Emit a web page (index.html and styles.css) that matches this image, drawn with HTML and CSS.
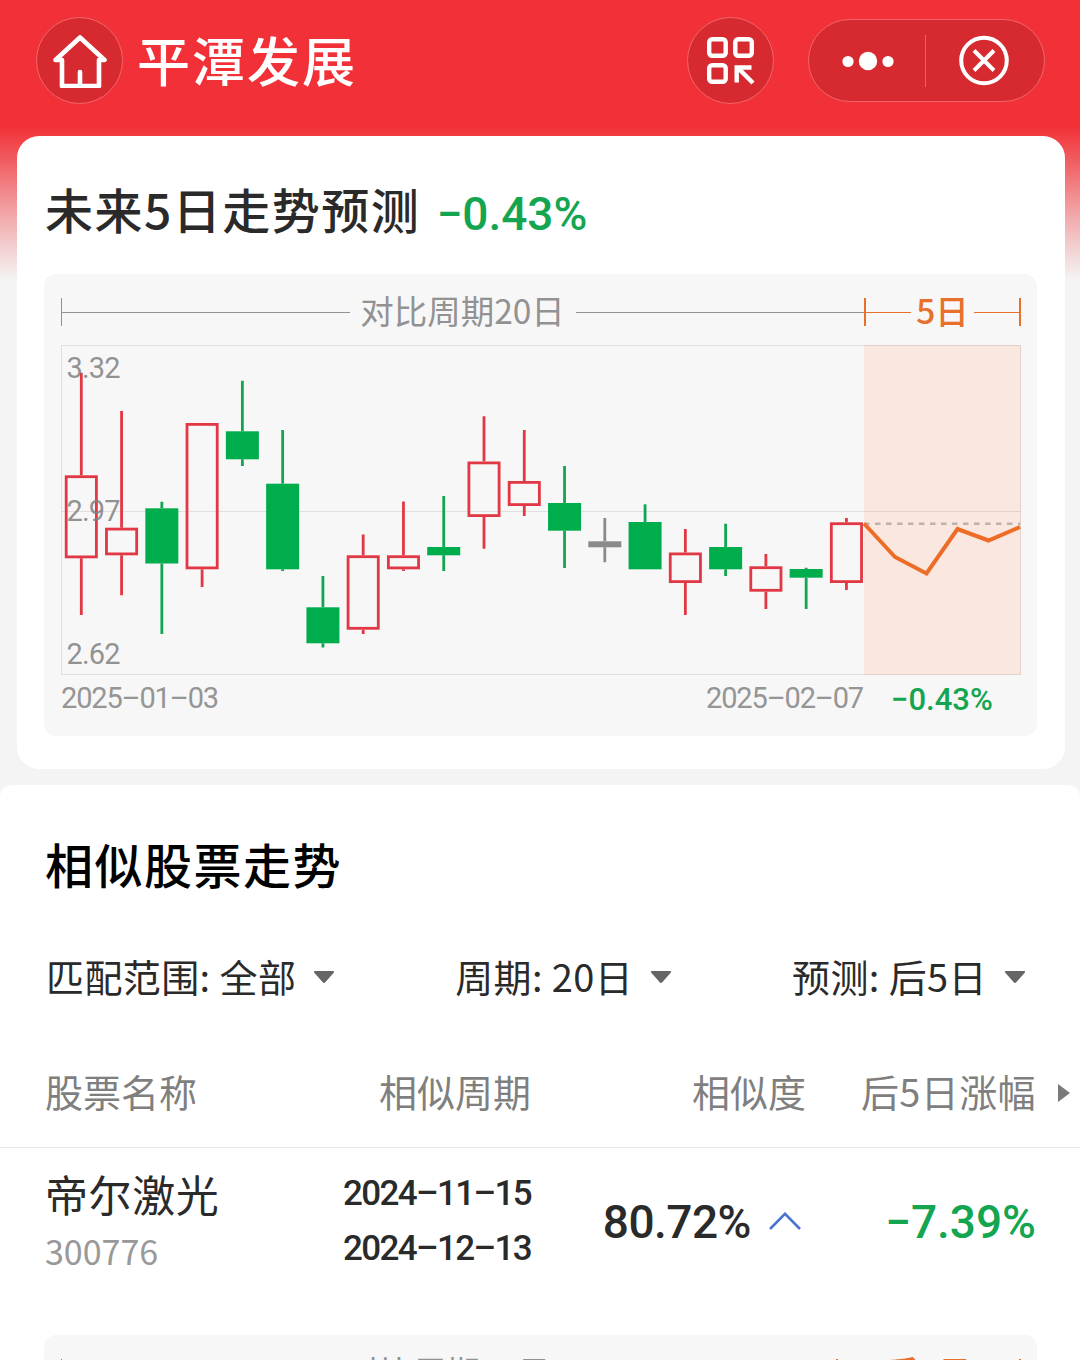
FILE: index.html
```html
<!DOCTYPE html>
<html lang="zh-CN">

<head>
  <meta charset="UTF-8">
  <meta name="viewport" content="width=device-width, initial-scale=1.0">
  <title>平潭发展</title>
  <link rel="stylesheet" href="styles.css">
</head>

<body>
  <header class="header">
    <div class="round-btn">
      <svg class="home" width="58" height="58" viewBox="0 0 58 58" fill="none" stroke="#fff" stroke-width="4.6" stroke-linecap="round" stroke-linejoin="round">
        <path d="M10.500 30H4.500L29 7.500 53.500 30H48V56H11V30" />
        <path d="M29 55V42" />
      </svg>
    </div>
    <h1 class="stock-name">平潭发展</h1>
    <div class="round-btn scan-btn">
      <svg width="48" height="48" viewBox="0.5 0.5 48 48" fill="none" stroke="#fff" stroke-width="4.4">
        <rect x="2.700" y="2.700" width="16.500" height="16.500" rx="3" />
        <rect x="28.800" y="2.700" width="16.500" height="16.500" rx="3" />
        <rect x="2.700" y="28.800" width="16.500" height="16.500" rx="3" />
        <path d="M45 31H30.200V46M31 31 46.500 46.500" />
      </svg>
    </div>
    <div class="capsule">
      <svg class="dots" width="54" height="20" viewBox="0 0 54 20" fill="#fff">
        <circle cx="7" cy="10.500" r="5.600" />
        <circle cx="27" cy="10" r="9.200" />
        <circle cx="47" cy="10.500" r="5.600" />
      </svg>
      <span class="capsule-line"></span>
      <svg class="close" width="52" height="52" viewBox="0 0.5 52 52" fill="none" stroke="#fff" stroke-width="4">
        <circle cx="26" cy="26" r="22.800" />
        <path d="M16 16 36 36M36 16 16 36" />
      </svg>
    </div>
  </header>

  <section class="card">
    <div class="card-title">
      <h2>未来5日走势预测</h2>
      <span class="forecast num green">−0.43%</span>
    </div>
    <div class="chart">
      <div class="ranges">
        <div class="range history">
          <span>对比周期20日</span>
        </div>
        <div class="range future">
          <span>5日</span>
        </div>
      </div>
      <svg class="plot" id="plot" width="960" height="330" viewBox="61 345 960 330"></svg>
      <div class="dates num">
        <span>2025–01–03</span>
        <span class="date-end">2025–02–07</span>
        <span class="date-change green">−0.43%</span>
      </div>
    </div>
  </section>

  <section class="similar">
    <h2 class="similar-title">相似股票走势</h2>
    <div class="filters">
      <div class="filter"><span>匹配范围: 全部</span>
        <svg width="22" height="14" viewBox="0 0 22 14"><path d="M2 1H20Q22 1 20.500 3L12.500 12Q11 14 9.500 12L1.500 3Q0 1 2 1Z" fill="#666" /></svg>
      </div>
      <div class="filter"><span>周期: 20日</span>
        <svg width="22" height="14" viewBox="0 0 22 14"><path d="M2 1H20Q22 1 20.500 3L12.500 12Q11 14 9.500 12L1.500 3Q0 1 2 1Z" fill="#666" /></svg>
      </div>
      <div class="filter"><span>预测: 后5日</span>
        <svg width="22" height="14" viewBox="0 0 22 14"><path d="M2 1H20Q22 1 20.500 3L12.500 12Q11 14 9.500 12L1.500 3Q0 1 2 1Z" fill="#666" /></svg>
      </div>
    </div>

    <div class="row table-head">
      <div>股票名称</div>
      <div>相似周期</div>
      <div>相似度</div>
      <div class="head-change">后5日涨幅</div>
      <svg width="12" height="18" viewBox="0 0 12 18"><path d="M0 0 12 9 0 18Z" fill="#7a7a7a" /></svg>
    </div>
    <div class="row table-row">
      <div>
        <div class="name">帝尔激光</div>
        <div class="code">300776</div>
      </div>
      <div class="period num">2024–11–15<br>2024–12–13</div>
      <div class="similarity num">80.72%
        <svg width="32" height="20" viewBox="0 0 32 20" fill="none" stroke="#4a73d1" stroke-width="2.600"><path d="M1 17 16 1.800 31 17" /></svg>
      </div>
      <div class="change num green">−7.39%</div>
    </div>

    <div class="chart next-chart">
      <div class="ranges">
        <div class="range history">
          <span>对比周期20日</span>
        </div>
        <div class="range future">
          <span>后5日</span>
        </div>
      </div>
    </div>
  </section>

  <script>
    // [type, high, top, bottom, low]
    const candles = [
      ['up', 372.7, 475.3, 558.3, 615],
      ['up', 411, 527.7, 555.3, 595.3],
      ['down', 501.7, 508.3, 563.5, 634],
      ['up', 423, 423, 569.3, 587],
      ['down', 380.7, 431.3, 459.3, 466],
      ['down', 430, 483.7, 569.3, 571],
      ['down', 576, 607.3, 643.3, 647.5],
      ['up', 534.5, 555.3, 629.7, 634],
      ['up', 501.5, 555.3, 569.3, 571],
      ['down', 496, 547, 555.3, 571],
      ['up', 416.3, 461.5, 517, 548.7],
      ['up', 430, 481, 506, 516],
      ['down', 466, 503, 530.7, 568],
      ['flat', 518, 541.3, 547.3, 562.3],
      ['down', 504.3, 522, 569.3, 569.3],
      ['up', 529, 552.5, 583, 615],
      ['down', 523.7, 547, 569.3, 576],
      ['up', 554, 566.3, 591.7, 609],
      ['down', 567.7, 569, 577.7, 609],
      ['up', 518, 522.3, 583, 590]
    ];
    const forecast = [[864, 523.5], [895, 557], [926.5, 573.5], [957.5, 529], [988.5, 540.5], [1020, 527]];

    let svg = `
      <rect class="zone" x="864" y="345" width="157" height="330" />
      <path class="grid" d="M61.500 345.500H1020.500V674.500H61.500ZM61.500 511.500H1020.500" />`;

    candles.forEach(([type, high, top, bottom, low], i) => {
      const x = 81.3 + i * 40.27;
      // 空心蜡烛的边框画在实体内侧
      const pad = type === 'up' ? 1.4 : 0;
      svg += `
        <g class="${type}">
          <path d="M${x} ${high}V${top}M${x} ${bottom}V${low}" />
          <rect x="${x - 16.5 + pad}" y="${top + pad}" width="${33 - pad * 2}" height="${bottom - top - pad * 2}" />
        </g>`;
    });

    svg += `
      <path class="base" d="M864 523.700H1020" />
      <polyline class="forecast-line" points="${forecast.join(' ')}" />
      <text x="66.500" y="378" textLength="54">3.32</text>
      <text x="66.500" y="521" textLength="54">2.97</text>
      <text x="66.500" y="664" textLength="54">2.62</text>`;

    document.getElementById('plot').innerHTML = svg;
  </script>
</body>

</html>
```

FILE: styles.css
```css
* {
  box-sizing: border-box;
}

body {
  margin: 0;
  height: 1360px;
  overflow: hidden;
  background: #f4f4f4 linear-gradient(#f23037 0, #f23037 126px, #f0575b 156px, #f29a9d 205px, #f2c9ca 242px, #f4f4f4 280px) no-repeat;
  background-size: 100% 280px;
  color: #2a2a2a;
  font-family: "Noto Sans CJK SC", sans-serif;
}

h1,
h2 {
  margin: 0;
  font-weight: 500;
}

.num {
  font-family: Roboto, sans-serif;
  font-weight: 500;
  white-space: nowrap;
}

.green {
  color: #14a550;
}

.header {
  display: flex;
  align-items: center;
  height: 136px;
  padding: 0 35px 15px 36px;
}

.round-btn {
  display: flex;
  align-items: center;
  justify-content: center;
  width: 87px;
  height: 87px;
  border: 1px solid #f2666b;
  border-radius: 50%;
  background-color: #d62a30;
}

.home {
  margin: 0 0 4px 0;
}

.stock-name {
  margin: 0 0 4px 14px;
  color: white;
  font-size: 53px;
  letter-spacing: 2px;
  line-height: 80px;
}

.scan-btn {
  margin-left: auto;
}

.capsule {
  display: flex;
  align-items: center;
  width: 237px;
  height: 83px;
  margin-left: 34px;
  border: 1px solid #f2666b;
  border-radius: 42px;
  background-color: #d62a30;
}

.dots {
  margin-left: 32px;
}

.capsule-line {
  width: 1px;
  height: 52px;
  margin: 0 32px 0 30px;
  background-color: #ef6066;
}

.card {
  width: 1048px;
  height: 633px;
  margin-left: 17px;
  padding: 0 28px 0 27px;
  border-radius: 22px;
  background-color: white;
}

.card-title {
  display: flex;
  height: 138px;
  padding: 37px 0 0 1px;
}

.card-title h2 {
  font-size: 48px;
  letter-spacing: 1.5px;
  line-height: 70px;
}

.forecast {
  margin-left: 16px;
  padding-top: 6px;
  font-size: 46px;
  line-height: 70px;
}

.chart {
  width: 993px;
  height: 462px;
  padding: 19px 16px 0 17px;
  border-radius: 12px;
  background-color: #f7f7f7;
}

.ranges {
  display: flex;
  height: 52px;
}

.range {
  display: flex;
  align-items: center;
  height: 38px;
  font-size: 33.5px;
  line-height: 38px;
}

.range::before,
.range::after {
  content: "";
  flex: 1;
  height: 28px;
  background: linear-gradient(currentColor, currentColor) 0 14px / 100% 1px no-repeat;
}

.range::before {
  border-left: 1.5px solid;
}

.range span {
  padding-bottom: 5px;
}

.history {
  width: 803px;
  color: #929292;
}

.history span {
  margin: 0 11px 0 10px;
}

.future {
  width: 157px;
  color: #e86f2c;
  font-weight: 500;
}

.future::before {
  border-left-width: 2px;
}

.future::after {
  border-right: 2px solid;
}

.future span {
  margin: 0 5px;
}

.plot {
  display: block;
}

.grid {
  fill: none;
  stroke: #000;
  stroke-opacity: 0.09;
}

.zone {
  fill: #f9e7e0;
}

.up path,
.up rect {
  fill: none;
  stroke: #e23744;
  stroke-width: 2.8;
}

.down rect {
  fill: #00ad4c;
}

.down path {
  stroke: #12a552;
  stroke-width: 2.8;
}

.flat rect {
  fill: #8a8a8a;
}

.flat path {
  stroke: #8a8a8a;
  stroke-width: 2.8;
}

.base {
  stroke: #bfb2ad;
  stroke-width: 2.5;
  stroke-dasharray: 5.5;
}

.forecast-line {
  fill: none;
  stroke: #ee6d26;
  stroke-width: 4;
}

.plot text {
  fill: #808080;
  fill-opacity: 0.85;
  font-family: Roboto, sans-serif;
  font-size: 29px;
}

.dates {
  display: flex;
  align-items: center;
  height: 46px;
  color: #959595;
  font-size: 29px;
  font-weight: 400;
  letter-spacing: -1.15px;
}

.date-end {
  margin-left: auto;
}

.date-change {
  width: 102px;
  margin: 3px 28px 0 28px;
  font-size: 31px;
  font-weight: 500;
  letter-spacing: 0;
}

.similar {
  height: 575px;
  margin-top: 16px;
  overflow: hidden;
  border-radius: 12px 12px 0 0;
  background-color: white;
}

.similar-title {
  height: 152px;
  padding: 43px 0 0 45px;
  color: black;
  font-size: 48px;
  letter-spacing: 1.5px;
  line-height: 70px;
}

.filters {
  display: flex;
  justify-content: space-between;
  align-items: center;
  height: 80px;
  padding: 0 54px 0 46px;
}

.filter {
  display: flex;
  align-items: center;
  gap: 17px;
  font-size: 38px;
  letter-spacing: 0.4px;
}

.filter span {
  padding-bottom: 4px;
}

.row {
  display: grid;
  grid-template-columns: 285px 201px 275px 230px auto;
  align-items: center;
  padding-left: 45px;
}

.table-head {
  height: 131px;
  padding-top: 22px;
  border-bottom: 1px solid #e8e8e8;
  color: #7f7f7f;
  font-size: 38px;
}

.table-head div {
  padding-bottom: 5px;
}

.table-head div:not(:first-child) {
  text-align: right;
}

.table-head .head-change {
  letter-spacing: 0.4px;
}

.table-head svg {
  margin-left: 22px;
}

.table-row {
  height: 148px;
  margin-bottom: 39px;
}

.name {
  font-size: 43px;
  letter-spacing: 0.6px;
  line-height: 58px;
}

.code {
  padding: 4px 0;
  color: #999;
  font-size: 34px;
  line-height: 50px;
}

.period {
  padding-bottom: 2px;
  font-size: 35px;
  letter-spacing: -1.6px;
  line-height: 55px;
  text-align: right;
}

.similarity {
  display: flex;
  align-items: center;
  justify-content: flex-end;
  gap: 18px;
  padding-right: 5px;
  font-size: 46px;
  letter-spacing: -0.5px;
}

.change {
  font-size: 46px;
  text-align: right;
}

.next-chart {
  margin-left: 44px;
}

.next-chart .history {
  width: 775px;
}

.next-chart .future {
  width: 185px;
}
```
